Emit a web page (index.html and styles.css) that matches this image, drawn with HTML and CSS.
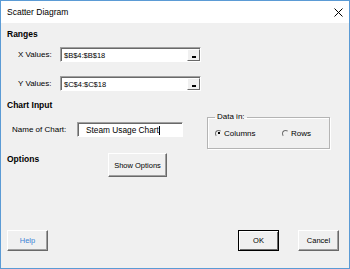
FILE: index.html
```html
<!DOCTYPE html>
<html lang="en">
<head>
    <meta charset="UTF-8">
    <title>Scatter Diagram</title>
    <link rel="stylesheet" href="styles.css">
</head>
<body>
    <div class="dialog">
        <div class="titlebar">
            <span class="title">Scatter Diagram</span>
            <svg class="close" width="9" height="9" viewBox="0 0 9 9">
                <path d="M0.5 0.5 L8.5 8.5 M8.5 0.5 L0.5 8.5" stroke="#000" stroke-width="1" fill="none"/>
            </svg>
        </div>

        <div class="content">
            <div class="heading heading-ranges">Ranges</div>

            <div class="range-row row-x">
                <span class="range-label">X Values:</span>
                <div class="refedit">
                    <span class="value">$B$4:$B$18</span>
                    <span class="collapse"><span class="bar"></span></span>
                </div>
            </div>

            <div class="range-row row-y">
                <span class="range-label">Y Values:</span>
                <div class="refedit">
                    <span class="value">$C$4:$C$18</span>
                    <span class="collapse"><span class="bar"></span></span>
                </div>
            </div>

            <div class="heading heading-chart">Chart Input</div>

            <div class="chart-row">
                <div class="name-field">
                    <span class="name-label">Name of Chart:</span>
                    <div class="textbox">Steam Usage Chart<span class="caret"></span></div>
                </div>
                <fieldset class="groupbox">
                    <legend>Data in:</legend>
                    <div class="radios">
                        <span class="radio-option option-columns"><span class="radio checked"></span>Columns</span>
                        <span class="radio-option"><span class="radio"></span>Rows</span>
                    </div>
                </fieldset>
            </div>

            <div class="options-row">
                <div class="heading heading-options">Options</div>
                <button class="btn btn-options">Show Options</button>
            </div>

            <div class="footer">
                <button class="btn btn-help">Help</button>
                <div class="actions">
                    <button class="btn btn-default">OK</button>
                    <button class="btn">Cancel</button>
                </div>
            </div>
        </div>
    </div>
</body>
</html>
```

FILE: styles.css
```css
body {
    margin: 0;
    background: #f0f0f0;
}
.dialog {
    width: 350px;
    height: 269px;
    box-sizing: border-box;
    border: 1px solid #5b9bd5;
    background: #f0f0f0;
    display: flex;
    flex-direction: column;
    font-family: "Liberation Sans", Arial, sans-serif;
    font-size: 8px;
    color: #000;
}
.titlebar {
    height: 22px;
    background: #fff;
    display: flex;
    align-items: center;
    justify-content: space-between;
    padding: 0 6px 0 6px;
}
.title {
    font-size: 8.5px;
}
.close {
    display: block;
}
.content {
    flex: 1;
    display: flex;
    flex-direction: column;
    padding: 0 10px 17px 6px;
}
.heading {
    font-weight: bold;
    font-size: 8.5px;
    line-height: 12px;
}
.heading-ranges {
    margin-top: 5px;
}
.heading-chart {
    margin-top: 8px;
}
.range-row {
    display: flex;
    align-items: center;
    height: 15px;
    padding-left: 11px;
}
.row-x {
    margin-top: 7px;
}
.row-y {
    margin-top: 14px;
}
.range-label {
    width: 42px;
}
.refedit,
.textbox {
    box-sizing: border-box;
    height: 15px;
    background: #fff;
    border: 1px solid;
    border-color: #a0a0a0 #fff #fff #a0a0a0;
    box-shadow: inset 1px 1px 0 #696969;
}
.refedit {
    width: 141px;
    display: flex;
    align-items: center;
    justify-content: space-between;
    padding: 1px 0 0 3px;
}
.value {
    font-size: 7.5px;
}
.collapse {
    box-sizing: border-box;
    width: 13px;
    height: 12px;
    background: #f0f0f0;
    border: 1px solid;
    border-color: #fff #696969 #696969 #fff;
    display: flex;
    align-items: flex-end;
    justify-content: center;
    padding-bottom: 2px;
}
.bar {
    width: 4px;
    height: 2px;
    background: #000;
}
.chart-row {
    display: flex;
    align-items: flex-start;
}
.name-field {
    display: flex;
    align-items: center;
    margin-top: 11px;
    padding-left: 5px;
}
.name-label {
    width: 65px;
}
.textbox {
    width: 106px;
    padding: 1px 0 0 8px;
    font-size: 8.3px;
    line-height: 12px;
    display: flex;
    align-items: center;
}
.caret {
    width: 1px;
    height: 9px;
    background: #000;
}
.groupbox {
    box-sizing: border-box;
    width: 123px;
    margin: 1px 0 0 24px;
    padding: 0 7px 9px 7px;
    min-width: 0;
    border: 1px solid #b4b4b4;
    box-shadow: 1px 1px 0 #fff, inset 1px 1px 0 #fff;
}
.groupbox legend {
    padding: 0 2px;
    font-size: 8px;
    line-height: 10px;
}
.radios {
    display: flex;
    align-items: center;
    height: 12px;
    margin-top: 5px;
}
.radio-option {
    display: flex;
    align-items: center;
    gap: 2px;
}
.option-columns {
    width: 67px;
}
.radio {
    box-sizing: border-box;
    width: 7px;
    height: 7px;
    border-radius: 50%;
    border: 1px solid;
    border-color: #707070 #f0f0f0 #f0f0f0 #707070;
    display: flex;
    align-items: center;
    justify-content: center;
}
.radio.checked::after {
    content: "";
    width: 2px;
    height: 2px;
    background: #000;
}
.options-row {
    display: flex;
    align-items: flex-start;
    margin-top: 4px;
}
.heading-options {
    width: 101px;
}
.btn {
    box-sizing: border-box;
    margin: 0;
    padding: 0;
    height: 21px;
    background: #f0f0f0;
    border: 1px solid;
    border-color: #fff #696969 #696969 #fff;
    box-shadow: inset -1px -1px 0 #a0a0a0;
    font-family: "Liberation Sans", Arial, sans-serif;
    font-size: 7.5px;
    color: #000;
}
.btn-options {
    width: 59px;
    height: 24px;
}
.footer {
    margin-top: auto;
    display: flex;
    justify-content: space-between;
    align-items: flex-end;
}
.btn-help {
    width: 41px;
    color: #3d85d6;
}
.actions {
    display: flex;
    gap: 19px;
}
.actions .btn {
    width: 41px;
}
.btn-default {
    border-color: #000;
    box-shadow: inset 1px 1px 0 #fff, inset -1px -1px 0 #696969;
}
```
